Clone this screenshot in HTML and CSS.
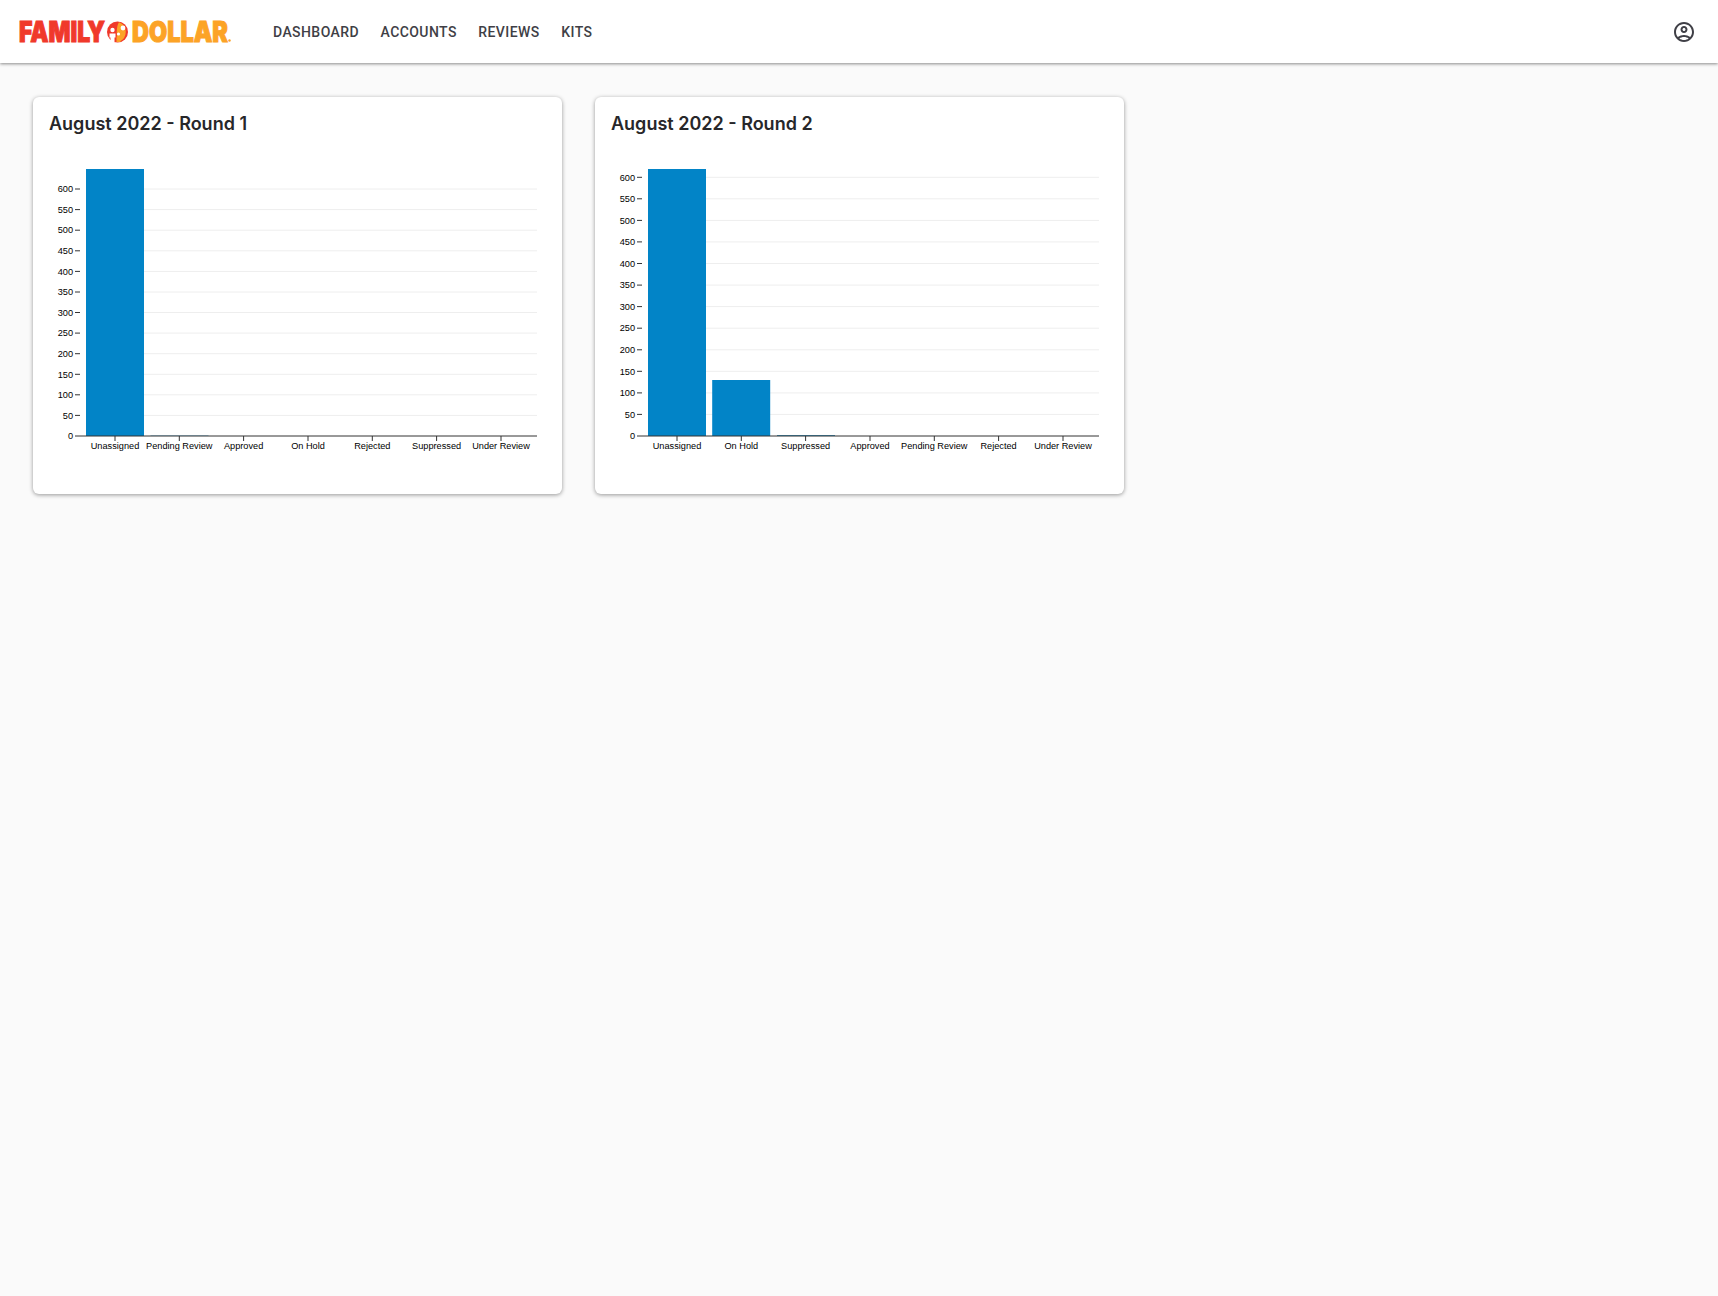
FILE: index.html
```html
<!DOCTYPE html>
<html lang="en">

<head>
  <meta charset="UTF-8">
  <meta name="viewport" content="width=device-width, initial-scale=1.0">
  <title>Dashboard</title>
  <link rel="stylesheet" href="styles.css">
</head>

<body>
  <header class="topbar">
    <svg class="logo" viewBox="0 -7 240 36" role="img" aria-label="Family Dollar">
      <text class="logo-word logo-red" x="0" y="20.5" textLength="86" lengthAdjust="spacingAndGlyphs">FAMILY</text>
      <circle cx="98.5" cy="11" r="10.5" fill="#f0392b" />
      <path d="M100 1.2a10.5 10.5 0 0 1 0 19.6c-3-3-3-16 0-19.6z" fill="#fca326" />
      <circle cx="93.5" cy="9" r="2.2" fill="#fff" />
      <path d="M90.5 12.5h6v4h-1v4.5h-4v-4.5h-1z" fill="#fff" />
      <circle cx="99.5" cy="13" r="1.6" fill="#fff" />
      <path d="M97.5 15.5h4v5.5h-4z" fill="#fca326" />
      <circle cx="104" cy="7" r="2.4" fill="#fff" />
      <text class="logo-word logo-orange" x="113" y="20.5" textLength="96" lengthAdjust="spacingAndGlyphs">DOLLAR</text>
      <circle cx="210.5" cy="19.5" r="1.2" fill="#fca326" />
    </svg>
    <nav class="mainnav">
      <a href="#">Dashboard</a>
      <a href="#">Accounts</a>
      <a href="#">Reviews</a>
      <a href="#">Kits</a>
    </nav>
    <svg class="usericon" viewBox="0 0 24 24" aria-label="Account">
      <path d="M12 2C6.48 2 2 6.48 2 12s4.48 10 10 10 10-4.48 10-10S17.52 2 12 2zM7.35 18.5C8.66 17.56 10.26 17 12 17s3.34.56 4.65 1.5c-1.31.94-2.91 1.5-4.65 1.5s-3.34-.56-4.65-1.5zm10.79-1.38C16.45 15.8 14.32 15 12 15s-4.45.8-6.14 2.12C4.7 15.73 4 13.95 4 12c0-4.42 3.58-8 8-8s8 3.58 8 8c0 1.95-.7 3.73-1.86 5.12zM12 6c-1.93 0-3.5 1.57-3.5 3.5S10.07 13 12 13s3.5-1.57 3.5-3.5S13.93 6 12 6zm0 5c-.83 0-1.5-.67-1.5-1.5S11.17 8 12 8s1.5.67 1.5 1.5S12.83 11 12 11z" />
    </svg>
  </header>

  <main class="cards">
    <section class="card">
      <h2 class="card-title">August 2022 - Round 1</h2>
      <svg class="chart" viewBox="1 0 529 343">
        <g class="grid">
          <line x1="54" x2="505" y1="265.4" y2="265.4" />
          <line x1="54" x2="505" y1="244.8" y2="244.8" />
          <line x1="54" x2="505" y1="224.3" y2="224.3" />
          <line x1="54" x2="505" y1="203.7" y2="203.7" />
          <line x1="54" x2="505" y1="183.1" y2="183.1" />
          <line x1="54" x2="505" y1="162.5" y2="162.5" />
          <line x1="54" x2="505" y1="142" y2="142" />
          <line x1="54" x2="505" y1="121.4" y2="121.4" />
          <line x1="54" x2="505" y1="100.8" y2="100.8" />
          <line x1="54" x2="505" y1="80.2" y2="80.2" />
          <line x1="54" x2="505" y1="59.6" y2="59.6" />
          <line x1="54" x2="505" y1="39" y2="39" />
        </g>
        <rect class="bar" x="54" y="19" width="58" height="267" />
        <rect class="bar-faint" x="118.5" y="285" width="58" height="1" />
        <g class="ticks">
          <line x1="43" x2="48" y1="265.4" y2="265.4" />
          <line x1="43" x2="48" y1="244.8" y2="244.8" />
          <line x1="43" x2="48" y1="224.3" y2="224.3" />
          <line x1="43" x2="48" y1="203.7" y2="203.7" />
          <line x1="43" x2="48" y1="183.1" y2="183.1" />
          <line x1="43" x2="48" y1="162.5" y2="162.5" />
          <line x1="43" x2="48" y1="142" y2="142" />
          <line x1="43" x2="48" y1="121.4" y2="121.4" />
          <line x1="43" x2="48" y1="100.8" y2="100.8" />
          <line x1="43" x2="48" y1="80.2" y2="80.2" />
          <line x1="43" x2="48" y1="59.6" y2="59.6" />
          <line x1="43" x2="48" y1="39" y2="39" />
          <line x1="83" x2="83" y1="286" y2="291" />
          <line x1="147.3" x2="147.3" y1="286" y2="291" />
          <line x1="211.6" x2="211.6" y1="286" y2="291" />
          <line x1="276" x2="276" y1="286" y2="291" />
          <line x1="340.3" x2="340.3" y1="286" y2="291" />
          <line x1="404.6" x2="404.6" y1="286" y2="291" />
          <line x1="469" x2="469" y1="286" y2="291" />
        </g>
        <line class="baseline" x1="43" x2="505" y1="286" y2="286" />
        <g class="ylabels">
          <text x="41" y="289">0</text>
          <text x="41" y="268.6">50</text>
          <text x="41" y="248">100</text>
          <text x="41" y="227.5">150</text>
          <text x="41" y="206.9">200</text>
          <text x="41" y="186.3">250</text>
          <text x="41" y="165.7">300</text>
          <text x="41" y="145.2">350</text>
          <text x="41" y="124.6">400</text>
          <text x="41" y="104">450</text>
          <text x="41" y="83.4">500</text>
          <text x="41" y="62.8">550</text>
          <text x="41" y="42.2">600</text>
        </g>
        <g class="xlabels">
          <text x="83" y="299">Unassigned</text>
          <text x="147.3" y="299">Pending Review</text>
          <text x="211.6" y="299">Approved</text>
          <text x="276" y="299">On Hold</text>
          <text x="340.3" y="299">Rejected</text>
          <text x="404.6" y="299">Suppressed</text>
          <text x="469" y="299">Under Review</text>
        </g>
      </svg>
    </section>

    <section class="card">
      <h2 class="card-title">August 2022 - Round 2</h2>
      <svg class="chart" viewBox="1 0 529 343">
        <g class="grid">
          <line x1="54" x2="505" y1="264.4" y2="264.4" />
          <line x1="54" x2="505" y1="242.9" y2="242.9" />
          <line x1="54" x2="505" y1="221.3" y2="221.3" />
          <line x1="54" x2="505" y1="199.8" y2="199.8" />
          <line x1="54" x2="505" y1="178.2" y2="178.2" />
          <line x1="54" x2="505" y1="156.6" y2="156.6" />
          <line x1="54" x2="505" y1="135.1" y2="135.1" />
          <line x1="54" x2="505" y1="113.5" y2="113.5" />
          <line x1="54" x2="505" y1="91.9" y2="91.9" />
          <line x1="54" x2="505" y1="70.4" y2="70.4" />
          <line x1="54" x2="505" y1="48.8" y2="48.8" />
          <line x1="54" x2="505" y1="27.3" y2="27.3" />
        </g>
        <rect class="bar" x="54" y="19" width="58" height="267" />
        <rect class="bar" x="118.2" y="230" width="58" height="56" />
        <rect class="bar-low" x="183" y="285" width="58" height="1" />
        <g class="ticks">
          <line x1="43" x2="48" y1="264.4" y2="264.4" />
          <line x1="43" x2="48" y1="242.9" y2="242.9" />
          <line x1="43" x2="48" y1="221.3" y2="221.3" />
          <line x1="43" x2="48" y1="199.8" y2="199.8" />
          <line x1="43" x2="48" y1="178.2" y2="178.2" />
          <line x1="43" x2="48" y1="156.6" y2="156.6" />
          <line x1="43" x2="48" y1="135.1" y2="135.1" />
          <line x1="43" x2="48" y1="113.5" y2="113.5" />
          <line x1="43" x2="48" y1="91.9" y2="91.9" />
          <line x1="43" x2="48" y1="70.4" y2="70.4" />
          <line x1="43" x2="48" y1="48.8" y2="48.8" />
          <line x1="43" x2="48" y1="27.3" y2="27.3" />
          <line x1="83" x2="83" y1="286" y2="291" />
          <line x1="147.3" x2="147.3" y1="286" y2="291" />
          <line x1="211.6" x2="211.6" y1="286" y2="291" />
          <line x1="276" x2="276" y1="286" y2="291" />
          <line x1="340.3" x2="340.3" y1="286" y2="291" />
          <line x1="404.6" x2="404.6" y1="286" y2="291" />
          <line x1="469" x2="469" y1="286" y2="291" />
        </g>
        <line class="baseline" x1="43" x2="505" y1="286" y2="286" />
        <g class="ylabels">
          <text x="41" y="289">0</text>
          <text x="41" y="267.6">50</text>
          <text x="41" y="246.1">100</text>
          <text x="41" y="224.5">150</text>
          <text x="41" y="203">200</text>
          <text x="41" y="181.4">250</text>
          <text x="41" y="159.8">300</text>
          <text x="41" y="138.3">350</text>
          <text x="41" y="116.7">400</text>
          <text x="41" y="95.1">450</text>
          <text x="41" y="73.6">500</text>
          <text x="41" y="52">550</text>
          <text x="41" y="30.5">600</text>
        </g>
        <g class="xlabels">
          <text x="83" y="299">Unassigned</text>
          <text x="147.3" y="299">On Hold</text>
          <text x="211.6" y="299">Suppressed</text>
          <text x="276" y="299">Approved</text>
          <text x="340.3" y="299">Pending Review</text>
          <text x="404.6" y="299">Rejected</text>
          <text x="469" y="299">Under Review</text>
        </g>
      </svg>
    </section>
  </main>
</body>

</html>
```

FILE: styles.css
```css
* {
  box-sizing: border-box;
}

body {
  margin: 0;
  min-height: 1296px;
  background-color: #fafafa;
  font-family: Inter, "Noto Sans", sans-serif;
}

.topbar {
  display: flex;
  align-items: center;
  height: 63px;
  padding: 0 22px 0 19px;
  background-color: #fff;
  box-shadow: 0 1px 3px rgba(0, 0, 0, .45);
}

.logo {
  width: 240px;
  height: 36px;
  flex: none;
}

.logo-word {
  font-family: Inter, sans-serif;
  font-size: 28px;
  font-weight: 900;
  stroke-width: 1px;
}

.logo-red {
  fill: #f0392b;
  stroke: #f0392b;
}

.logo-orange {
  fill: #fca326;
  stroke: #fca326;
}

.mainnav {
  display: flex;
  gap: 21.5px;
  margin-left: 14px;
}

.mainnav a {
  color: #3f3f46;
  font-family: Roboto, sans-serif;
  font-size: 14px;
  font-weight: 500;
  letter-spacing: .42px;
  text-decoration: none;
  text-transform: uppercase;
}

.usericon {
  width: 24px;
  height: 24px;
  margin-left: auto;
  fill: #3f3f46;
}

.cards {
  display: flex;
  align-items: flex-start;
  gap: 33px;
  padding: 34px 33px;
}

.card {
  width: 529px;
  height: 397px;
  background-color: #fff;
  border-radius: 6px;
  box-shadow: 0 1px 4px rgba(0, 0, 0, .4);
}

.card-title {
  height: 53px;
  margin: 0;
  padding: 13px 16px 0;
  color: #27272a;
  font-size: 18px;
  font-weight: 600;
  line-height: 28px;
}

.chart {
  display: block;
  width: 529px;
  height: 343px;
}

.chart text {
  fill: #000;
  font-family: "Liberation Sans", Arial, sans-serif;
  font-size: 9.2px;
}

.grid line {
  stroke: #eeeeee;
}

.ticks line,
.baseline {
  stroke: #333;
}

.bar {
  fill: #0284c7;
}

.bar-faint {
  fill: #a9cfe3;
}

.bar-low {
  fill: #3d8fb8;
}

.ylabels text {
  text-anchor: end;
}

.xlabels text {
  text-anchor: middle;
}
```
